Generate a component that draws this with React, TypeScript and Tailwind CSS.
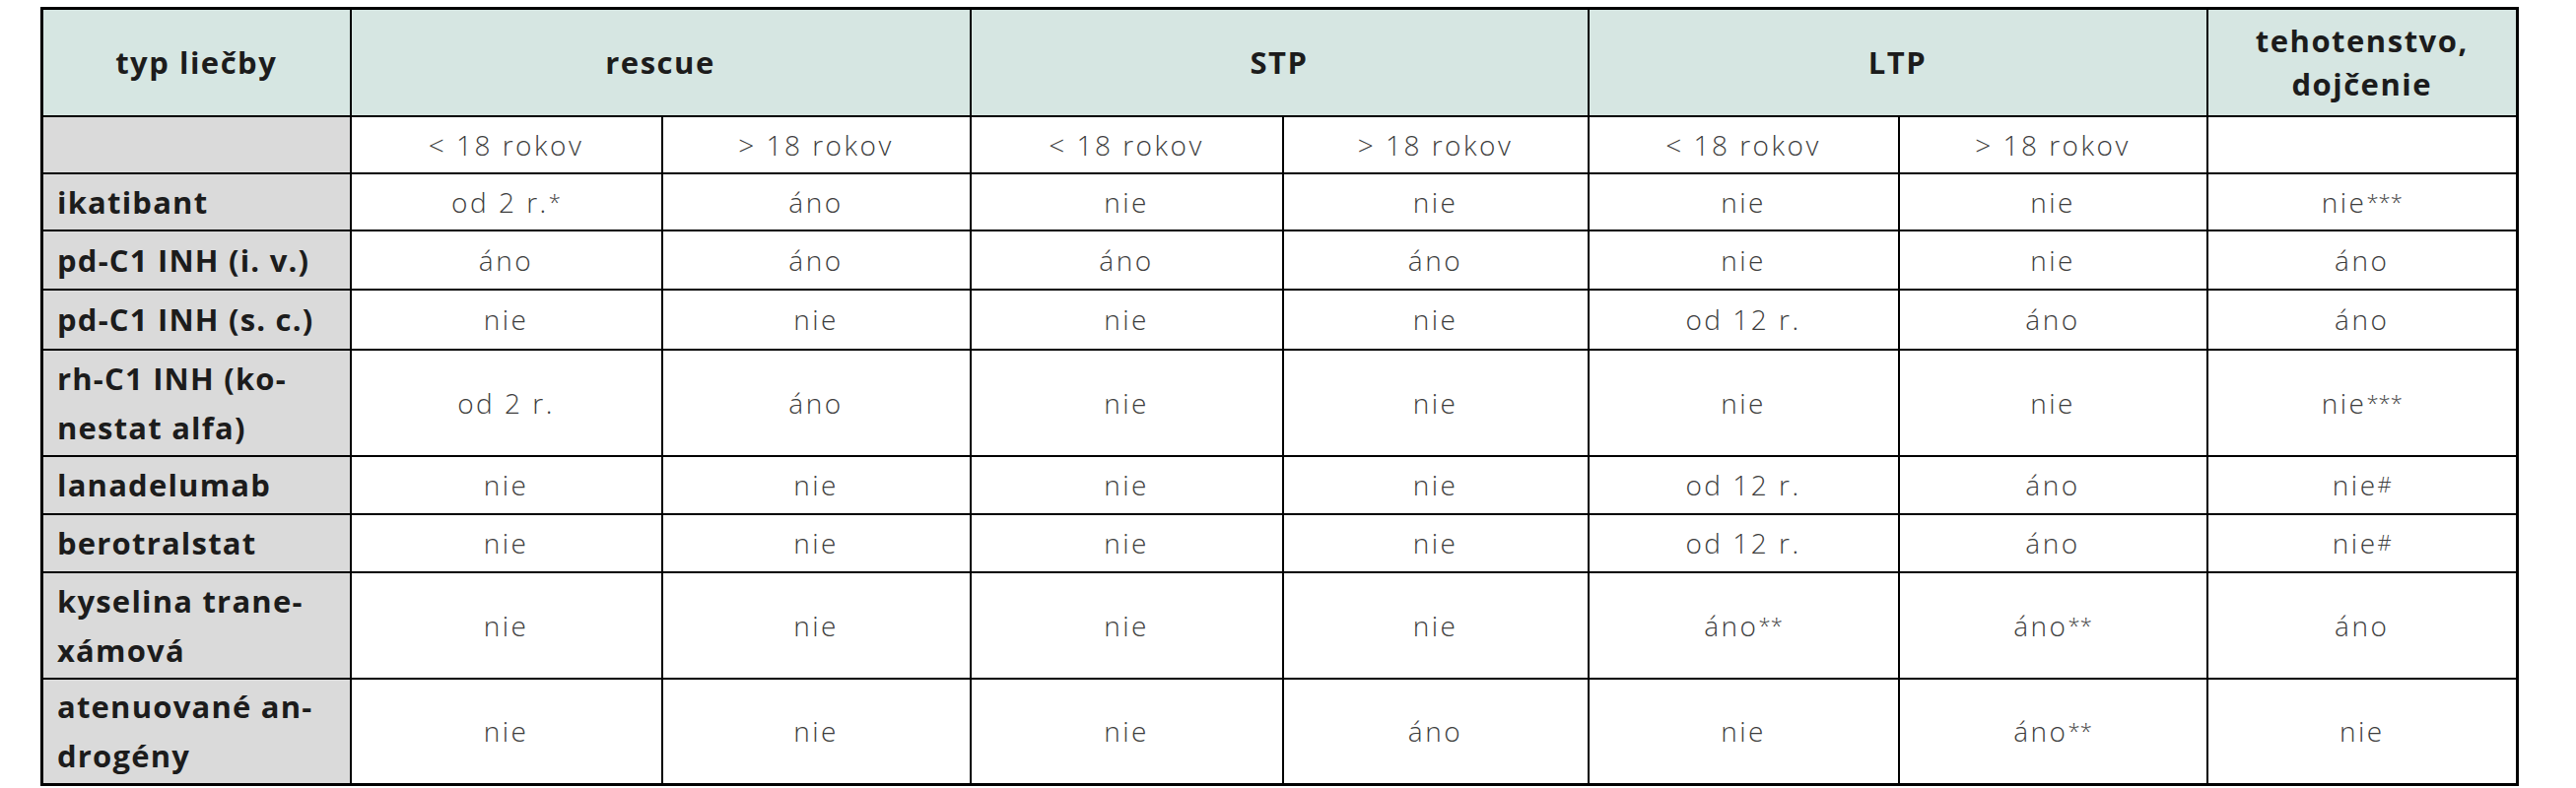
import React from "react";

type Cell = { t: string; sup?: string };

const rows: { label: React.ReactNode; h: string; cells: Cell[] }[] = [
  { label: "ikatibant", h: "h-[58px]", cells: [{ t: "od 2 r.", sup: "*" }, { t: "áno" }, { t: "nie" }, { t: "nie" }, { t: "nie" }, { t: "nie" }, { t: "nie", sup: "***" }] },
  { label: "pd-C1 INH (i. v.)", h: "h-[60px]", cells: [{ t: "áno" }, { t: "áno" }, { t: "áno" }, { t: "áno" }, { t: "nie" }, { t: "nie" }, { t: "áno" }] },
  { label: "pd-C1 INH (s. c.)", h: "h-[61px]", cells: [{ t: "nie" }, { t: "nie" }, { t: "nie" }, { t: "nie" }, { t: "od 12 r." }, { t: "áno" }, { t: "áno" }] },
  { label: <>rh-C1 INH (ko-<br />nestat alfa)</>, h: "h-[108px]", cells: [{ t: "od 2 r." }, { t: "áno" }, { t: "nie" }, { t: "nie" }, { t: "nie" }, { t: "nie" }, { t: "nie", sup: "***" }] },
  { label: "lanadelumab", h: "h-[59px]", cells: [{ t: "nie" }, { t: "nie" }, { t: "nie" }, { t: "nie" }, { t: "od 12 r." }, { t: "áno" }, { t: "nie", sup: "#" }] },
  { label: "berotralstat", h: "h-[59px]", cells: [{ t: "nie" }, { t: "nie" }, { t: "nie" }, { t: "nie" }, { t: "od 12 r." }, { t: "áno" }, { t: "nie", sup: "#" }] },
  { label: <>kyselina trane-<br />xámová</>, h: "h-[108px]", cells: [{ t: "nie" }, { t: "nie" }, { t: "nie" }, { t: "nie" }, { t: "áno", sup: "**" }, { t: "áno", sup: "**" }, { t: "áno" }] },
  { label: <>atenuované an-<br />drogény</>, h: "h-[108px]", cells: [{ t: "nie" }, { t: "nie" }, { t: "nie" }, { t: "áno" }, { t: "nie" }, { t: "áno", sup: "**" }, { t: "nie" }] },
];

const bd = "border-2 border-black";
const hd = `${bd} bg-[#d6e6e2] text-center align-middle font-bold text-[31px] leading-[44px] tracking-[1.5px] text-[#1c1c1c]`;
const dc = `${bd} bg-white text-center align-middle font-light text-[28px] tracking-[2.5px] text-[#3d3d3d]`;
const lb = `${bd} bg-[#dadada] text-left align-middle font-bold text-[31px] leading-[50px] tracking-[1.2px] text-[#1c1c1c] pl-[14px] pr-1`;

export default function App() {
  return (
    <div className="w-[2614px] h-[800px] bg-white pt-[7px] pl-[41px]" style={{ fontFamily: '"Open Sans", "Noto Sans", sans-serif' }}>
      <table className="table-fixed border-collapse w-[2513px] border-[3px] border-black">
        <colgroup>
          <col className="w-[313px]" />
          <col className="w-[316px]" />
          <col className="w-[313px]" />
          <col className="w-[317px]" />
          <col className="w-[310px]" />
          <col className="w-[315px]" />
          <col className="w-[313px]" />
          <col className="w-[315px]" />
        </colgroup>
        <tbody>
          <tr className="h-[109px]">
            <td className={hd}>typ liečby</td>
            <td className={hd} colSpan={2}>rescue</td>
            <td className={hd} colSpan={2}>STP</td>
            <td className={hd} colSpan={2}>LTP</td>
            <td className={hd}>tehotenstvo,<br />dojčenie</td>
          </tr>
          <tr className="h-[58px]">
            <td className={`${bd} bg-[#dadada]`}></td>
            <td className={dc}>&lt; 18 rokov</td>
            <td className={dc}>&gt; 18 rokov</td>
            <td className={dc}>&lt; 18 rokov</td>
            <td className={dc}>&gt; 18 rokov</td>
            <td className={dc}>&lt; 18 rokov</td>
            <td className={dc}>&gt; 18 rokov</td>
            <td className={dc}></td>
          </tr>
          {rows.map((r, i) => (
            <tr key={i} className={r.h}>
              <td className={lb}>{r.label}</td>
              {r.cells.map((c, j) => (
                <td key={j} className={dc}>
                  {c.t}
                  {c.sup && <sup className="text-[22px] tracking-[0px] relative top-[-3px]">{c.sup}</sup>}
                </td>
              ))}
            </tr>
          ))}
        </tbody>
      </table>
    </div>
  );
}
